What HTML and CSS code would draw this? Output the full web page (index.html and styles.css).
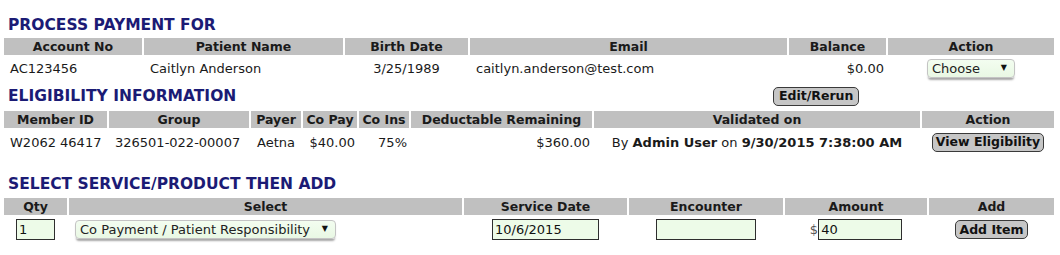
FILE: index.html
```html
<!DOCTYPE html>
<html lang="en">
<head>
  <meta charset="UTF-8">
  <title>Process Payment</title>
  <link rel="stylesheet" href="styles.css">
</head>
<body>
  <div class="page">

    <h2 class="title">PROCESS PAYMENT FOR</h2>
    <table class="grid grid-patient">
      <colgroup>
        <col style="width:138px"><col style="width:199px"><col style="width:123px">
        <col style="width:317px"><col style="width:97px"><col style="width:166px">
      </colgroup>
      <thead>
        <tr>
          <th>Account No</th>
          <th>Patient Name</th>
          <th>Birth Date</th>
          <th>Email</th>
          <th>Balance</th>
          <th>Action</th>
        </tr>
      </thead>
      <tbody>
        <tr>
          <td class="pad">AC123456</td>
          <td class="pad">Caitlyn Anderson</td>
          <td class="center">3/25/1989</td>
          <td class="pad">caitlyn.anderson@test.com</td>
          <td class="num">$0.00</td>
          <td class="center">
            <span class="pick pick-small">
              <select><option>Choose</option></select>
            </span>
          </td>
        </tr>
      </tbody>
    </table>

    <div class="title-row">
      <h2 class="title">ELIGIBILITY INFORMATION</h2>
      <button class="btn btn-wide">Edit/Rerun</button>
    </div>
    <table class="grid grid-elig">
      <colgroup>
        <col style="width:103px"><col style="width:140px"><col style="width:50px"><col style="width:54px">
        <col style="width:50px"><col style="width:181px"><col style="width:326px"><col style="width:132px">
      </colgroup>
      <thead>
        <tr>
          <th>Member ID</th>
          <th>Group</th>
          <th>Payer</th>
          <th>Co Pay</th>
          <th>Co Ins</th>
          <th>Deductable Remaining</th>
          <th>Validated on</th>
          <th>Action</th>
        </tr>
      </thead>
      <tbody>
        <tr>
          <td class="pad">W2062 46417</td>
          <td class="pad">326501-022-00007</td>
          <td class="pad">Aetna</td>
          <td class="num">$40.00</td>
          <td class="num">75%</td>
          <td class="num">$360.00</td>
          <td class="center">By <b>Admin User</b> on <b>9/30/2015 7:38:00 AM</b></td>
          <td class="center"><button class="btn">View Eligibility</button></td>
        </tr>
      </tbody>
    </table>

    <h2 class="title title-gap">SELECT SERVICE/PRODUCT THEN ADD</h2>
    <table class="grid grid-add">
      <colgroup>
        <col style="width:63px"><col style="width:393px"><col style="width:163px">
        <col style="width:154px"><col style="width:142px"><col style="width:125px">
      </colgroup>
      <thead>
        <tr>
          <th>Qty</th>
          <th>Select</th>
          <th>Service Date</th>
          <th>Encounter</th>
          <th>Amount</th>
          <th>Add</th>
        </tr>
      </thead>
      <tbody>
        <tr>
          <td class="center"><input class="field field-qty" type="text" value="1"></td>
          <td class="pad">
            <span class="pick pick-wide">
              <select><option>Co Payment / Patient Responsibility</option></select>
            </span>
          </td>
          <td class="center"><input class="field field-date" type="text" value="10/6/2015"></td>
          <td class="center"><input class="field field-enc" type="text" value=""></td>
          <td class="center"><span class="dollar">$</span><input class="field field-amt" type="text" value="40"></td>
          <td class="center"><button class="btn">Add Item</button></td>
        </tr>
      </tbody>
    </table>

  </div>
</body>
</html>
```

FILE: styles.css
```css
body {
  margin: 0;
  background-color: #fff;
  font-family: "DejaVu Sans", Verdana, sans-serif;
  font-size: 13px;
  color: #1a1a1a;
}

.page {
  padding: 15px 2px 0;
}

.title {
  margin: 0 0 3px;
  padding-left: 6px;
  font-size: 15.5px;
  line-height: 20px;
  font-weight: bold;
  color: #1b1b75;
}

.title-row {
  display: flex;
  align-items: center;
  margin: 4px 0 5px;
}

.title-row .title {
  margin: 0;
  width: 765px;
}

.title-gap {
  margin-top: 18px;
  margin-bottom: 4px;
}

.grid {
  border-collapse: separate;
  border-spacing: 2px 0;
  table-layout: fixed;
  width: 1054px;
}

.grid th {
  background-color: #c0c0c0;
  font-size: 12.5px;
  font-weight: bold;
  line-height: 17px;
  height: 17px;
  padding: 0;
  text-align: center;
  white-space: nowrap;
}

.grid td {
  padding: 0 2px;
  white-space: nowrap;
  vertical-align: middle;
}

.grid-patient td {
  height: 27px;
}

.grid-elig td {
  height: 28px;
}

.grid-add td {
  height: 29px;
}

td.pad {
  padding-left: 6px;
}

td.center {
  text-align: center;
}

td.num {
  text-align: right;
}

.btn {
  font-family: "DejaVu Sans", Verdana, sans-serif;
  font-size: 12.5px;
  font-weight: bold;
  color: #111;
  background-color: #c6c6c6;
  border: 1px solid #3a3a3a;
  border-radius: 5px;
  height: 19px;
  padding: 0 3px;
  line-height: 16px;
  cursor: pointer;
}

.btn-wide {
  padding: 0 5px;
}

.pick {
  position: relative;
  display: inline-block;
  vertical-align: middle;
}

.pick select {
  appearance: none;
  -webkit-appearance: none;
  font-family: "DejaVu Sans", Verdana, sans-serif;
  font-size: 13px;
  color: #222;
  height: 19px;
  padding: 0 4px;
  border: 1px solid #c4c4c4;
  border-radius: 4px;
  background: linear-gradient(#f3fdf0, #e9f8e4);
  box-shadow: 0 3px 2px -1px rgba(0, 0, 0, 0.35);
  display: block;
}

.pick::after {
  content: "\25BC";
  position: absolute;
  right: 8px;
  top: 4px;
  font-size: 8px;
  color: #111;
  pointer-events: none;
}

.pick-small select {
  width: 88px;
}

.pick-wide select {
  width: 261px;
}

.field {
  box-sizing: border-box;
  height: 21px;
  border: 1px solid #2e2e2e;
  background-color: #edfbe8;
  font-family: "DejaVu Sans", Verdana, sans-serif;
  font-size: 13px;
  color: #111;
  padding: 0 2px;
  vertical-align: middle;
}

.field-qty {
  width: 39px;
}

.field-date {
  width: 107px;
}

.field-enc {
  width: 100px;
}

.field-amt {
  width: 84px;
}

.dollar {
  color: #555;
  vertical-align: middle;
}
```
